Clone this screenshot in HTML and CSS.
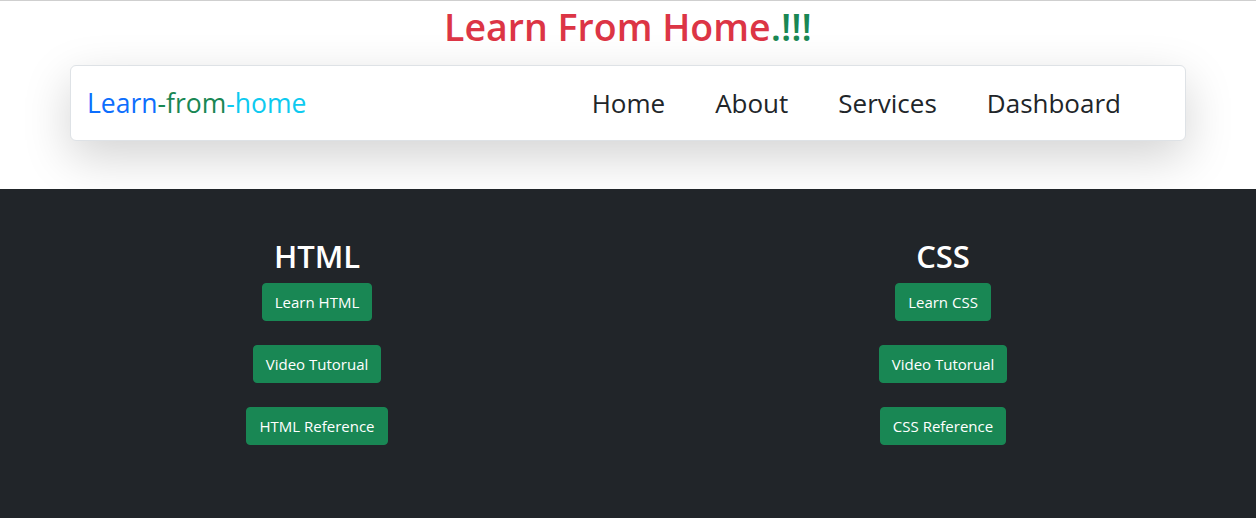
FILE: index.html
```html
<!DOCTYPE html>
<html lang="en">
<head>
<meta charset="utf-8">
<title>Learn From Home</title>
<link rel="stylesheet" href="styles.css">
</head>
<body>
<header class="top">
  <h1 class="title">Learn From Home<span class="bang">.!!!</span></h1>
  <div class="container">
    <nav class="navbar">
      <a class="brand" href="#"><span class="b-blue">Learn</span><span class="b-green">-from</span><span class="b-cyan">-home</span></a>
      <ul class="nav">
        <li><a href="#">Home</a></li>
        <li><a href="#">About</a></li>
        <li><a href="#">Services</a></li>
        <li><a href="#">Dashboard</a></li>
      </ul>
    </nav>
  </div>
</header>
<section class="dark">
  <div class="col">
    <h2>HTML</h2>
    <a class="btn" href="#">Learn HTML</a>
    <a class="btn" href="#">Video Tutorual</a>
    <a class="btn" href="#">HTML Reference</a>
  </div>
  <div class="col">
    <h2>CSS</h2>
    <a class="btn" href="#">Learn CSS</a>
    <a class="btn" href="#">Video Tutorual</a>
    <a class="btn" href="#">CSS Reference</a>
  </div>
</section>
</body>
</html>
```

FILE: styles.css
```css
* { box-sizing: border-box; }
html, body { margin: 0; padding: 0; }
body {
  font-family: "Open Sans", "Noto Sans", sans-serif;
  color: #212529;
  background: #fff;
}
a { text-decoration: none; }
.top {
  border-top: 1px solid #cfcfcf;
  padding-bottom: 48px;
}
.title {
  margin: 2px 0 14px;
  text-align: center;
  font-size: 37.5px;
  line-height: 48px;
  font-weight: 550;
  color: #dc3545;
}
.bang { color: #198754; }
.container {
  max-width: 1140px;
  margin: 0 auto;
  padding: 0 12px;
}
.navbar {
  display: flex;
  align-items: center;
  justify-content: space-between;
  height: 76px;
  padding: 0 16px;
  border: 1px solid #dee2e6;
  border-radius: 6px;
  background: #fff;
  box-shadow: 0 1rem 3rem rgba(0,0,0,.175);
}
.brand {
  font-size: 26.5px;
  line-height: 36px;
}
.b-blue { color: #0d6efd; }
.b-green { color: #198754; }
.b-cyan { color: #0dcaf0; }
.nav {
  display: flex;
  list-style: none;
  margin: 0 24px 0 0;
  padding: 0;
}
.nav a {
  display: block;
  padding: 0 25px;
  font-size: 26px;
  line-height: 36px;
  color: #212529;
}
.nav li:last-child a { padding-right: 24px; }
.dark {
  background: #212529;
  display: grid;
  grid-template-columns: 1fr 1fr;
  padding: 48px 0 73px 4px;
}
.col {
  display: flex;
  flex-direction: column;
  align-items: center;
  gap: 24px;
}
.col h2 {
  margin: 0 0 -16px;
  font-size: 31px;
  line-height: 38px;
  font-weight: 600;
  color: #fff;
}
.btn {
  display: inline-block;
  padding: 6px 12px;
  font-size: 15px;
  line-height: 24px;
  color: #fff;
  background: #198754;
  border: 1px solid #198754;
  border-radius: 4px;
}
```
